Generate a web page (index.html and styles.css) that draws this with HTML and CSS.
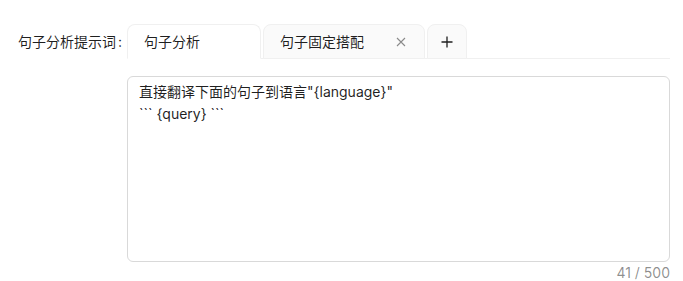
FILE: index.html
```html
<!DOCTYPE html>
<html lang="zh-CN">
<head>
    <meta charset="UTF-8">
    <meta name="viewport" content="width=device-width, initial-scale=1.0">
    <title>句子分析提示词</title>
    <link rel="stylesheet" href="styles.css">
</head>
<body>

    <form class="prompt-form">
        <div class="form-item">
            <label class="form-label" for="prompt">句子分析提示词</label>

            <div class="form-control">
                <div class="tabs-nav">
                    <div class="tab tab-active tab-first">句子分析</div>
                    <div class="tab tab-second">
                        <span>句子固定搭配</span>
                        <button type="button" class="tab-remove" aria-label="remove">
                            <svg width="10" height="10" viewBox="0 0 10 10">
                                <path d="M1 1 L9 9 M9 1 L1 9" stroke="currentColor" stroke-width="1.1" fill="none"/>
                            </svg>
                        </button>
                    </div>
                    <button type="button" class="tab tab-add" aria-label="add">
                        <svg width="12" height="12" viewBox="0 0 12 12">
                            <path d="M6 0.5 V11.5 M0.5 6 H11.5" stroke="currentColor" stroke-width="1.3" fill="none"/>
                        </svg>
                    </button>
                </div>

                <textarea id="prompt" class="prompt-input" maxlength="500" readonly>直接翻译下面的句子到语言"{language}"
``` {query} ```</textarea>
                <div class="char-count">41 / 500</div>
            </div>
        </div>
    </form>

</body>
</html>
```

FILE: styles.css
```css
body {
    margin: 0;
    background-color: #fff;
    font-family: Inter, "Noto Sans CJK SC", sans-serif;
    font-size: 14px;
    color: rgba(0, 0, 0, 0.88);
}

.prompt-form {
    padding: 24px 13px 0 0;
}

.form-item {
    display: flex;
    align-items: flex-start;
}

.form-label {
    width: 127px;
    flex: none;
    height: 35px;
    line-height: 35px;
    text-align: right;
    white-space: nowrap;
}

.form-label::after {
    content: ":";
    margin: 0 5px 0 2px;
}

.form-control {
    flex: 1;
    min-width: 0;
}

.tabs-nav {
    display: flex;
    gap: 2px;
    border-bottom: 1px solid #f0f0f0;
    height: 34px;
    margin-bottom: 17px;
}

.tab {
    box-sizing: border-box;
    height: 35px;
    display: flex;
    align-items: center;
    padding: 0 16px;
    border: 1px solid #f0f0f0;
    border-radius: 8px 8px 0 0;
    background-color: #fafafa;
    font-family: inherit;
    font-size: 14px;
    line-height: 22px;
    color: rgba(0, 0, 0, 0.88);
}

.tab-active {
    background-color: #fff;
    border-bottom-color: #fff;
}

.tab-first {
    width: 134px;
}

.tab-second {
    width: 162px;
    justify-content: space-between;
}

.tab-remove {
    display: flex;
    align-items: center;
    padding: 0;
    margin-right: 2px;
    border: none;
    background: transparent;
    color: rgba(0, 0, 0, 0.45);
    cursor: pointer;
}

.tab-add {
    width: 40px;
    justify-content: center;
    padding: 0;
    cursor: pointer;
}

.prompt-input {
    display: block;
    box-sizing: border-box;
    width: 100%;
    height: 186px;
    padding: 4px 11px;
    border: 1px solid #d9d9d9;
    border-radius: 6px;
    font-family: inherit;
    font-size: 14px;
    line-height: 22px;
    color: rgba(0, 0, 0, 0.88);
    resize: none;
    outline: none;
}

.char-count {
    text-align: right;
    line-height: 20px;
    margin-top: 1px;
    color: rgba(0, 0, 0, 0.45);
}
```
